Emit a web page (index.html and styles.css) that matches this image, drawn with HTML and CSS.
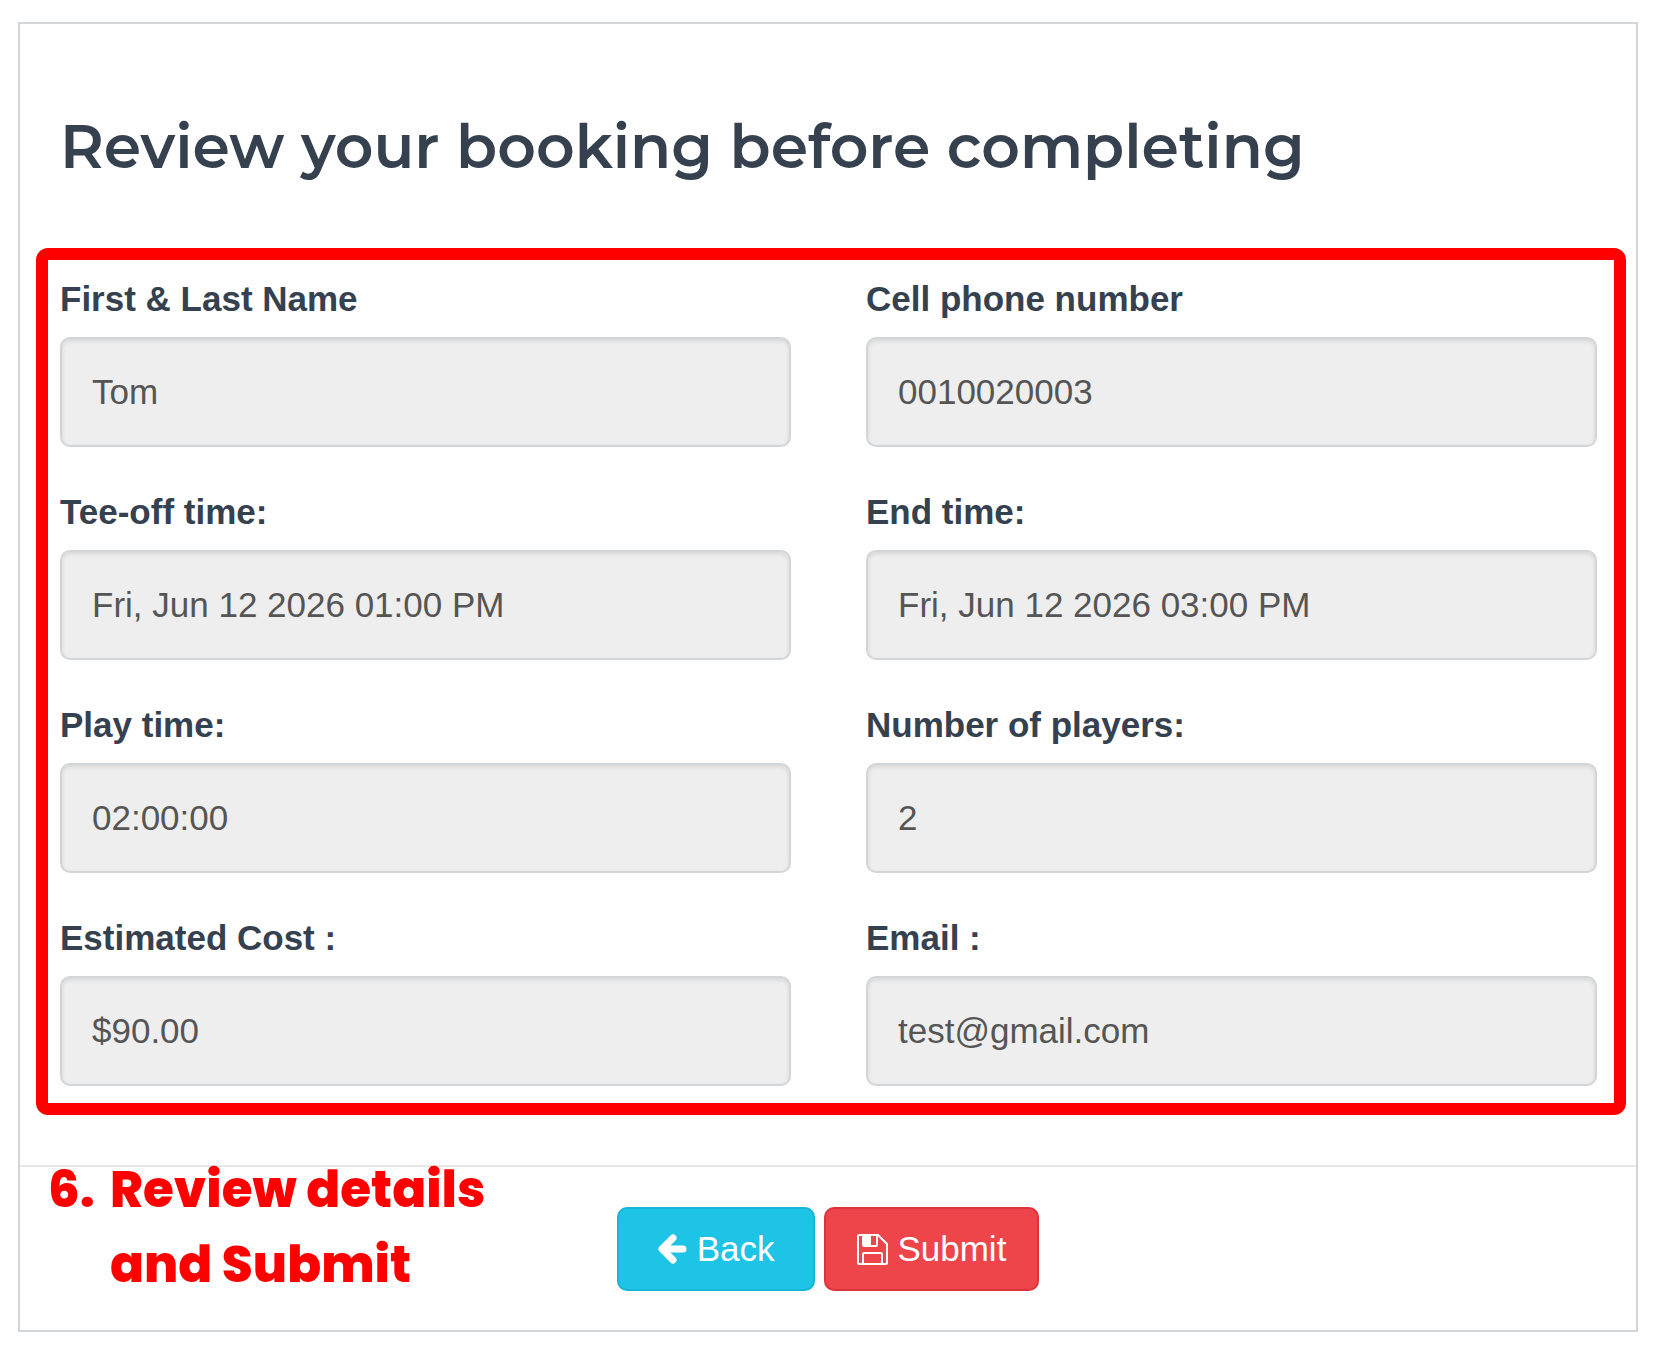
FILE: index.html
```html
<!DOCTYPE html>
<html lang="en">
<head>
  <meta charset="UTF-8">
  <meta name="viewport" content="width=device-width, initial-scale=1.0">
  <title>Review your booking</title>
  <link rel="stylesheet" href="styles.css">
</head>
<body>
  <form class="panel">
    <h1>Review your booking before completing</h1>

    <div class="details">
      <div class="field">
        <label for="name">First &amp; Last Name</label>
        <input type="text" id="name" value="Tom" readonly>
      </div>
      <div class="field">
        <label for="phone">Cell phone number</label>
        <input type="text" id="phone" value="0010020003" readonly>
      </div>
      <div class="field">
        <label for="start">Tee-off time:</label>
        <input type="text" id="start" value="Fri, Jun 12 2026 01:00 PM" readonly>
      </div>
      <div class="field">
        <label for="end">End time:</label>
        <input type="text" id="end" value="Fri, Jun 12 2026 03:00 PM" readonly>
      </div>
      <div class="field">
        <label for="duration">Play time:</label>
        <input type="text" id="duration" value="02:00:00" readonly>
      </div>
      <div class="field">
        <label for="players">Number of players:</label>
        <input type="text" id="players" value="2" readonly>
      </div>
      <div class="field">
        <label for="cost">Estimated Cost :</label>
        <input type="text" id="cost" value="$90.00" readonly>
      </div>
      <div class="field">
        <label for="email">Email :</label>
        <input type="text" id="email" value="test@gmail.com" readonly>
      </div>
    </div>

    <div class="footer">
      <div class="step">
        <span class="step-number">6.</span>
        <span>Review details<br>and Submit</span>
      </div>
      <div class="buttons">
        <button type="button" class="btn btn-info">
          <svg width="30" height="32" viewBox="0 0 30 32" aria-hidden="true">
            <path d="M15 5 L4 16 L15 27 M5 16 H25" fill="none" stroke="#fff" stroke-width="7" stroke-linecap="round" stroke-linejoin="round"/>
          </svg>
          Back
        </button>
        <button type="submit" class="btn btn-danger">
          <svg width="31" height="31" viewBox="0 0 31 31" aria-hidden="true">
            <path d="M2 1 H21 L30 10 V29 Q30 30 29 30 H2 Q1 30 1 29 V2 Q1 1 2 1 Z M6 30 V20 Q6 19 7 19 H24 Q25 19 25 20 V30 M6 1 V11 Q6 12 7 12 H19 Q20 12 20 11 V1" fill="none" stroke="#fff" stroke-width="2"/>
            <path d="M6 1 H14 V12 H6 Z" fill="#fff"/>
          </svg>
          Submit
        </button>
      </div>
    </div>
  </form>
</body>
</html>
```
FILE: styles.css
```css
* {
  box-sizing: border-box;
}

body {
  margin: 0;
  padding: 22px 20px 22px 18px;
  background-color: #fefefe;
  color: #364150;
  font-family: "Liberation Sans", Arial, sans-serif;
  font-size: 35px;
}

.panel {
  border: 2px solid #d3d6d9;
}

h1 {
  margin: 90px 40px 68px;
  font-family: Montserrat, Inter, sans-serif;
  font-size: 60px;
  font-weight: 600;
  line-height: 66px;
}

/* Highlighted booking details */
.details {
  display: grid;
  grid-template-columns: 1fr 1fr;
  gap: 41px 75px;
  margin: 0 10px 50px 16px;
  padding: 15px 17px 17px 12px;
  border: 12px solid #ff0000;
  border-radius: 12px;
}

.field label {
  display: block;
  margin-bottom: 14px;
  font-weight: bold;
  line-height: 48px;
}

.field input {
  display: block;
  width: 100%;
  height: 110px;
  padding: 0 30px;
  border: 2px solid #d3d6d8;
  border-radius: 10px;
  background-color: #eeeeee;
  box-shadow: inset 0 2px 4px rgba(0, 0, 0, 0.1);
  color: #555555;
  font-family: inherit;
  font-size: 35px;
}

.footer {
  display: grid;
  grid-template-columns: 1fr auto 1fr;
  border-top: 2px solid #e5e7e9;
}

.step {
  display: flex;
  margin-top: -15px;
  padding-left: 28px;
  color: #ff0000;
  font-family: Poppins, Inter, sans-serif;
  font-size: 50px;
  font-weight: 800;
  line-height: 75px;
  white-space: nowrap;
}

.step-number {
  width: 62px;
}

.buttons {
  display: flex;
  gap: 9px;
  padding: 40px 0 39px;
}

.btn {
  display: flex;
  align-items: center;
  gap: 9px;
  height: 84px;
  padding: 0 31px;
  border: 2px solid;
  border-radius: 10px;
  color: #ffffff;
  font-family: inherit;
  font-size: 35px;
  cursor: pointer;
}

.btn-info {
  padding: 0 39px;
  background-color: #1ec4e6;
  border-color: #18b6d6;
}

.btn-danger {
  background-color: #ed4549;
  border-color: #dd333c;
}
```
